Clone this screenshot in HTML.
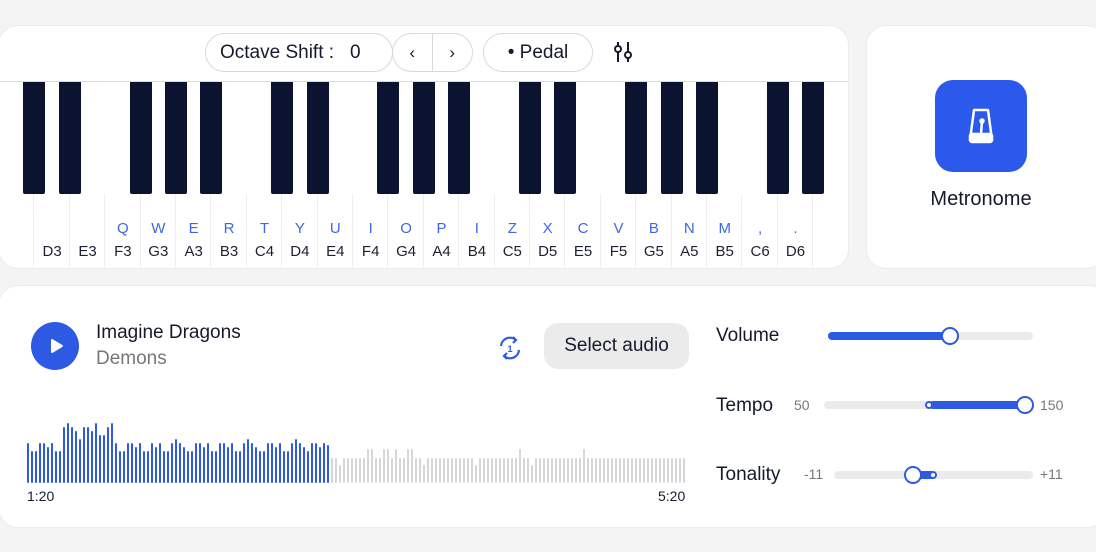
<!DOCTYPE html>
<html><head><meta charset="utf-8"><style>
*{margin:0;padding:0;box-sizing:border-box}
body{width:1096px;height:552px;background:#f4f4f5;font-family:"Liberation Sans",sans-serif;color:#161a2c;position:relative;overflow:hidden}
.card{position:absolute;background:#fff;border-radius:20px;border:1px solid #ececee}
.a{position:absolute}
.pill{position:absolute;border:1px solid #d8d8dc;border-radius:20px;background:#fff;height:39px;top:33px;font-size:19px;display:flex;align-items:center}
.wk{position:absolute;top:168px;height:75px;border-right:1px solid #efeff1}
.bk{position:absolute;top:56px;height:112px;width:22px;background:#0b1330;border-radius:0 0 2px 2px}
.lt{position:absolute;top:194px;font-size:15px;color:#3d67e0;width:36px;text-align:center}
.nt{position:absolute;top:217px;font-size:15px;color:#1c2030;width:36px;text-align:center}
.bar{position:absolute;bottom:69px;width:2px;border-radius:1px}
.track{position:absolute;height:8px;background:#ebebec;border-radius:4px}
.fill{position:absolute;height:8px;background:#2d59e3;border-radius:4px}
.thumb{position:absolute;width:18px;height:18px;border-radius:50%;background:#fff;border:2px solid #2d59e3}
.sm{position:absolute;width:8px;height:8px;border-radius:50%;background:#fff;border:2px solid #2d59e3}
.lab{position:absolute;font-size:19px;color:#161a2c}
.num{position:absolute;font-size:14px;color:#777}
</style></head><body>
<div class="card" style="left:-2px;top:25px;width:851px;height:244px;overflow:hidden">
  <div class="a" style="left:0;top:55px;width:851px;height:1px;background:#dcdce0"></div>
  <div id="keys"></div>
</div>
<div class="pill" style="left:205px;width:188px;padding-left:14px">Octave Shift :<span style="margin-left:16px">0</span></div>
<div class="pill" style="left:392px;width:81px;font-size:17px"><span style="width:40px;text-align:center;border-right:1px solid #d8d8dc;height:37px;line-height:37px">‹</span><span style="width:40px;text-align:center">›</span></div>
<div class="pill" style="left:483px;width:110px;justify-content:center">• Pedal</div>
<svg class="a" style="left:612px;top:40px" width="22" height="24" viewBox="0 0 22 24" fill="none" stroke="#161a2c" stroke-width="2"><line x1="6" y1="2" x2="6" y2="22"/><line x1="16" y1="2" x2="16" y2="22"/><circle cx="6" cy="9" r="3" fill="#fff"/><circle cx="16" cy="15" r="3" fill="#fff"/></svg>

<div class="card" style="left:866px;top:25px;width:240px;height:244px"></div>
<div class="a" style="left:935px;top:80px;width:92px;height:92px;border-radius:18px;background:#2b59ec"></div>
<svg class="a" style="left:966px;top:106px" width="30" height="40" viewBox="0 0 30 40" fill="none" stroke="#fff" stroke-width="2.5"><path d="M8 4h14l4 30H4z" stroke-linejoin="round"/><rect x="4" y="28" width="22" height="8" rx="2" fill="#fff"/><line x1="15" y1="28" x2="16" y2="15"/><circle cx="16" cy="15" r="1.5" fill="#fff"/></svg>
<div class="a" style="left:866px;width:230px;top:188px;text-align:center;font-size:20px">Metronome</div>

<div class="card" style="left:-2px;top:285px;width:1110px;height:243px"></div>
<div class="a" style="left:31px;top:322px;width:48px;height:48px;border-radius:50%;background:#2d59e3"></div>
<svg class="a" style="left:47px;top:336px" width="20" height="20" viewBox="0 0 20 20"><path d="M5 4L15 10L5 16Z" fill="#fff" stroke="#fff" stroke-width="2" stroke-linejoin="round"/></svg>
<div class="a" style="left:96px;top:322px;font-size:19px">Imagine Dragons</div>
<div class="a" style="left:96px;top:348px;font-size:19px;color:#777">Demons</div>
<svg class="a" style="left:495px;top:333px" width="30" height="30" viewBox="0 0 30 30" fill="none" stroke="#2d59e3" stroke-width="2.2"><path d="M6 13A9 9 0 0 1 21 7"/><path d="M24 17A9 9 0 0 1 9 23"/><path d="M18 4l3 3-3 3" /><path d="M12 26l-3-3 3-3"/><text x="15" y="19" font-size="9" fill="#2d59e3" stroke="none" text-anchor="middle" font-family="Liberation Sans" font-weight="bold">1</text></svg>
<div class="a" style="left:544px;top:323px;width:145px;height:46px;border-radius:14px;background:#ebebec;font-size:19px;text-align:center;line-height:46px">Select audio</div>
<div id="wave"></div>
<div class="a" style="left:27px;top:488px;font-size:14px">1:20</div>
<div class="a" style="left:658px;top:488px;font-size:14px">5:20</div>

<div class="lab" style="left:716px;top:325px">Volume</div>
<div class="track" style="left:828px;top:332px;width:205px"></div>
<div class="fill" style="left:828px;top:332px;width:122px"></div>
<div class="thumb" style="left:941px;top:327px"></div>

<div class="lab" style="left:716px;top:395px">Tempo</div>
<div class="num" style="left:794px;top:397px">50</div>
<div class="track" style="left:824px;top:401px;width:201px"></div>
<div class="fill" style="left:929px;top:401px;width:96px"></div>
<div class="sm" style="left:925px;top:401px"></div>
<div class="thumb" style="left:1016px;top:396px"></div>
<div class="num" style="left:1040px;top:397px">150</div>

<div class="lab" style="left:716px;top:464px">Tonality</div>
<div class="num" style="left:804px;top:466px">-11</div>
<div class="track" style="left:834px;top:471px;width:199px"></div>
<div class="fill" style="left:913px;top:471px;width:22px"></div>
<div class="sm" style="left:929px;top:471px"></div>
<div class="thumb" style="left:904px;top:466px"></div>
<div class="num" style="left:1040px;top:466px">+11</div>

<script>
var k='';var w=35.4,x0=0;
var notes=['C3','D3','E3','F3','G3','A3','B3','C4','D4','E4','F4','G4','A4','B4','C5','D5','E5','F5','G5','A5','B5','C6','D6'];
var letters='   QWERTYUIOPIZXCVBNM,.';
for(var i=0;i<23;i++){var l=x0+i*w;k+='<div class="wk" style="left:'+l+'px;width:'+w+'px"></div>';
 if(i>0){k+='<div class="nt" style="left:'+(l+w/2-18)+'px">'+notes[i]+'</div>';
 var c=letters.charAt(i); if(i>=3&&c&&c!==' ')k+='<div class="lt" style="left:'+(l+w/2-18)+'px">'+c+'</div>';}
 var n=notes[i][0]; if('CDFGA'.indexOf(n)>=0)k+='<div class="bk" style="left:'+(l+w-11)+'px"></div>';}
document.getElementById('keys').innerHTML=k;
var bh=[40,32,32,40,40,36,40,32,32,56,60,56,52,44,56,56,52,60,48,48,56,60,40,32,32,40,40,36,40,32,32,40,36,40,32,32,40,44,40,36,32,32,40,40,36,40,32,32,40,40,36,40,32,32,40,44,40,36,32,32,40,40,36,40,32,32,40,44,40,36,32,40,40,36,40,38];
var gh=[25,25,18,25,25,25,25,25,25,34,34,25,25,34,34,25,34,25,25,34,34,25,25,18,25,25,25,25,25,25,25,25,25,25,25,25,18,25,25,25,25,25,25,25,25,25,25,34,25,25,18,25,25,25,25,25,25,25,25,25,25,25,25,34,25,25,25,25,25,25,25,25,25,25,25,25,25,25,25,25,25,25,25,25,25,25,25,25,25];
var s='';
for(var i=0;i<76;i++)s+='<div class="bar" style="left:'+(27+i*4)+'px;height:'+bh[i]+'px;background:#2d59e3"></div>';
for(var i=0;i<89;i++)s+='<div class="bar" style="left:'+(331+i*4)+'px;height:'+gh[i]+'px;background:#d6d6d8"></div>';
document.getElementById('wave').innerHTML=s;
</script>
</body></html>
